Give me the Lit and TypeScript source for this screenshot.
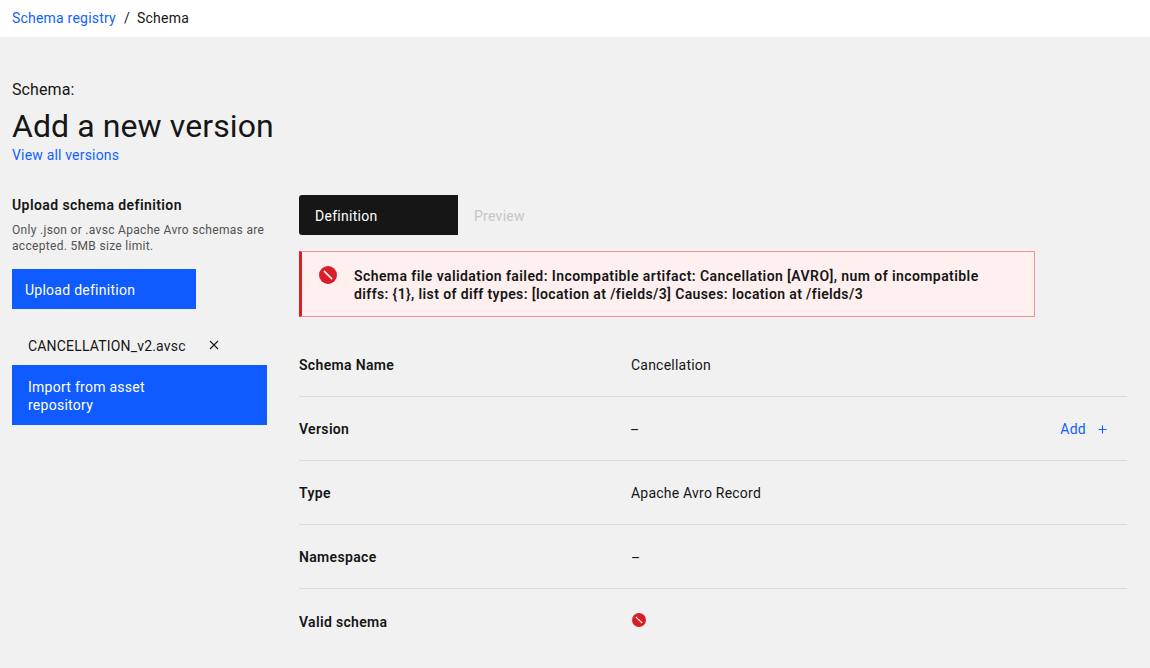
import { LitElement, html, css, svg, nothing } from "lit";
import { customElement, property } from "lit/decorators.js";

@customElement("error-icon")
class ErrorIcon extends LitElement {
  static styles = css`
    :host { display: block; }
    svg { display: block; width: 100%; height: 100%; }
  `;
  render() {
    return html`<svg viewBox="0 0 18 18">${svg`
      <circle cx="9" cy="9" r="9" fill="#da1e28"></circle>
      <path d="M4.9 4.9 L13.1 13.1" stroke="#fff" stroke-width="1.5" fill="none"></path>`}</svg>`;
  }
}

interface Row {
  label: string;
  value?: string;
  kind?: "add" | "invalid";
}

@customElement("schema-details")
class SchemaDetails extends LitElement {
  @property({ attribute: false }) rows: Row[] = [];
  static styles = css`
    :host { display: block; }
    .row {
      display: grid;
      grid-template-columns: 332px 1fr auto;
      align-items: start;
      height: 64px;
      box-sizing: border-box;
      padding: 23px 20px 0 0;
      border-bottom: 1px solid #dcdcdc;
    }
    .row.last { border-bottom: 0; padding-top: 24px; }
    .label { font-weight: 600; letter-spacing: 0.33px; }
    .value { letter-spacing: 0.22px; }
    .dash { padding-top: 1px; }
    .dash.editable { margin-left: -1px; }
    .add { display: flex; align-items: center; gap: 12px; color: #0f62fe; letter-spacing: 0.24px; }
    .plus { display: block; width: 9px; height: 9px; }
    .invalid { width: 14px; height: 14px; margin-left: 1px; }
  `;
  render() {
    return this.rows.map((r, i) => html`
      <div class="row ${i === this.rows.length - 1 ? "last" : ""}">
        <span class="label">${r.label}</span>
        ${r.kind === "invalid"
          ? html`<error-icon class="invalid"></error-icon>`
          : html`<span class="value ${r.value === "–" ? "dash" : ""} ${r.kind === "add" ? "editable" : ""}">${r.value}</span>`}
        ${r.kind === "add"
          ? html`<span class="add">Add<svg class="plus" viewBox="0 0 9 9"><path d="M4.5 .5v8M.5 4.5h8" stroke="#0f62fe" stroke-width="1.1"></path></svg></span>`
          : nothing}
      </div>`);
  }
}

@customElement("app-root")
class AppRoot extends LitElement {
  static styles = css`
    :host {
      display: block;
      height: 668px;
      overflow: hidden;
      background: #f1f1f1;
      color: #161616;
      font: 400 14px/18px Roboto, sans-serif;
      letter-spacing: 0.24px;
    }
    .crumbs {
      display: flex;
      height: 37px;
      box-sizing: border-box;
      padding: 9px 12px 0;
      background: #fff;
      white-space: pre;
    }
    .slash { width: 21px; padding-left: 8px; box-sizing: border-box; }
    .link { color: #0f62fe; }
    .crumbs .link { width: 104px; letter-spacing: 0.21px; }
    .head { padding: 42px 12px 0; }
    .kicker { font-size: 16px; line-height: 22px; letter-spacing: 0.1px; padding-bottom: 5px; }
    h1 { margin: 0; font-size: 32px; line-height: 40px; font-weight: 400; letter-spacing: 0.09px; }
    .head .link { letter-spacing: 0.18px; }
    .body { display: grid; grid-template-columns: 255px 828px; gap: 32px; padding: 31px 12px 0; }
    .side { padding-top: 1px; }
    h2 { margin: 0; font-size: 14px; line-height: 18px; font-weight: 600; letter-spacing: 0.41px; }
    .hint { margin: 8px 0 15px; color: #525252; font-size: 12px; line-height: 16px; letter-spacing: 0.31px; white-space: nowrap; }
    .btn { background: #0f5bff; color: #fff; box-sizing: border-box; letter-spacing: 0.26px; }
    .upload { width: 184px; height: 40px; padding: 12px 13px; }
    .file { display: flex; align-items: center; gap: 23px; padding: 28px 16px 10px; letter-spacing: 0.18px; }
    .close { display: block; width: 10px; height: 10px; margin-top: -2px; }
    .import { height: 60px; padding: 13px 90px 0 16px; }
    .tabs { display: flex; height: 40px; letter-spacing: 0.27px; }
    .tab { width: 159px; box-sizing: border-box; padding: 12px 16px; }
    .active { background: #161616; color: #fff; border-radius: 3px 0 0 3px; }
    .disabled { color: #c6c6c6; }
    .notice {
      display: flex;
      gap: 17px;
      width: 736px;
      height: 66px;
      box-sizing: border-box;
      margin: 16px 0;
      padding: 15px 17px 0;
      background: #fff0f0;
      border: 1px solid #f0949a;
      border-left: 3px solid #da1e28;
      font-weight: 600;
      white-space: nowrap;
    }
    .notice error-icon { width: 18px; height: 18px; margin-top: -1px; flex: none; }
    .l1 { letter-spacing: 0.42px; }
    .l2 { letter-spacing: 0.38px; }
  `;
  rows: Row[] = [
    { label: "Schema Name", value: "Cancellation" },
    { label: "Version", value: "–", kind: "add" },
    { label: "Type", value: "Apache Avro Record" },
    { label: "Namespace", value: "–" },
    { label: "Valid schema", kind: "invalid" },
  ];
  render() {
    return html`
      <nav class="crumbs"><span class="link">Schema registry</span><span class="slash">/</span><span>Schema</span></nav>
      <header class="head">
        <div class="kicker">Schema:</div>
        <h1>Add a new version</h1>
        <div class="link">View all versions</div>
      </header>
      <main class="body">
        <section class="side">
          <h2>Upload schema definition</h2>
          <div class="hint">Only .json or .avsc Apache Avro schemas are<br>accepted. 5MB size limit.</div>
          <div class="btn upload">Upload definition</div>
          <div class="file"><span>CANCELLATION_v2.avsc</span>
            <svg class="close" viewBox="0 0 10 10"><path d="M1 1l8 8M9 1L1 9" stroke="#161616" stroke-width="1.1"></path></svg>
          </div>
          <div class="btn import">Import from asset<br>repository</div>
        </section>
        <section>
          <div class="tabs"><div class="tab active">Definition</div><div class="tab disabled">Preview</div></div>
          <div class="notice">
            <error-icon></error-icon>
            <div>
              <div class="l1">Schema file validation failed: Incompatible artifact: Cancellation [AVRO], num of incompatible</div>
              <div class="l2">diffs: {1}, list of diff types: [location at /fields/3] Causes: location at /fields/3</div>
            </div>
          </div>
          <schema-details .rows=${this.rows}></schema-details>
        </section>
      </main>`;
  }
}
